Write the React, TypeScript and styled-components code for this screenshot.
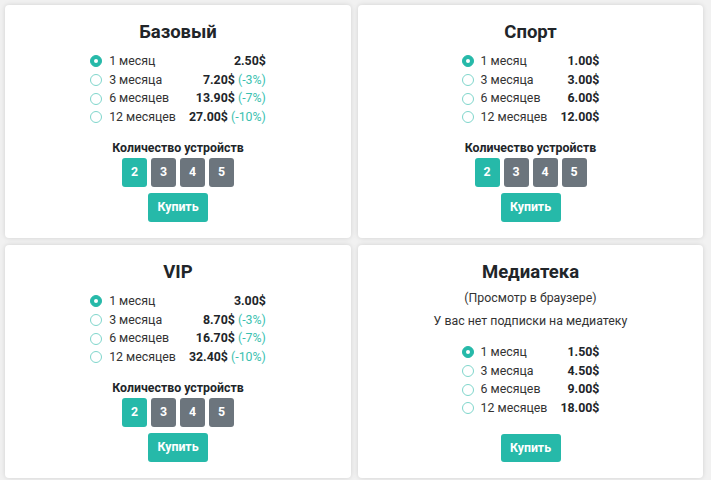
import React, { useState } from "react";
import styled, { createGlobalStyle } from "styled-components";

const GlobalStyle = createGlobalStyle`
  html, body { margin: 0; padding: 0; background: #f1f1f1; }
  body { font-family: Roboto, "Liberation Sans", Arial, sans-serif; color: #212529; }
  * { box-sizing: border-box; }
`;

const TEAL = "#26b9a9";
const FS = "12.35px";

const Page = styled.div`
  display: grid;
  grid-template-columns: 346px 345px;
  column-gap: 7px;
  row-gap: 7px;
  padding: 5px 8px 2px 5px;
  width: 711px;
  min-height: 480px;
`;

const Card = styled.section`
  background: #fff;
  border-radius: 4px;
  box-shadow: 0 0 5px rgba(0, 0, 0, 0.13);
  padding: 15px 16px 16px;
  display: flex;
  flex-direction: column;
  align-items: center;
  height: 233px;
`;

const Title = styled.h2<{ $tight?: boolean }>`
  margin: 0 0 ${(p) => (p.$tight ? "4px" : "8px")};
  font-size: 18.5px;
  line-height: 24px;
  font-weight: 700;
  color: #212529;
`;

const Note = styled.p<{ $last?: boolean }>`
  margin: ${(p) => (p.$last ? "3px 0 12px" : "0")};
  font-size: ${FS};
  line-height: 20px;
  color: #333;
`;

const Options = styled.div`
  display: grid;
  grid-template-columns: 12px auto auto;
  column-gap: 7px;
  align-items: center;
`;

const Radio = styled.span<{ $checked?: boolean }>`
  width: 12px;
  height: 12px;
  border-radius: 50%;
  border: 1px solid ${(p) => (p.$checked ? TEAL : "#7fd6cc")};
  background: ${(p) => (p.$checked ? TEAL : "#fff")};
  display: flex;
  align-items: center;
  justify-content: center;
  cursor: pointer;
  &::after {
    content: "";
    width: 4px;
    height: 4px;
    border-radius: 50%;
    background: #fff;
    display: ${(p) => (p.$checked ? "block" : "none")};
  }
`;

const Period = styled.span`
  font-size: ${FS};
  line-height: 18.67px;
  color: #333;
  padding-right: 6px;
  white-space: nowrap;
  cursor: pointer;
`;

const Price = styled.span`
  font-size: ${FS};
  line-height: 18.67px;
  font-weight: 700;
  color: #212529;
  justify-self: end;
  white-space: nowrap;
`;

const Discount = styled.span`
  font-weight: 400;
  color: #3bbfb0;
`;

const DevicesLabel = styled.div`
  margin-top: 13px;
  font-size: ${FS};
  line-height: 17px;
  font-weight: 700;
  color: #212529;
`;

const Devices = styled.div`
  display: flex;
  gap: 4px;
  margin-top: 1px;
`;

const DeviceButton = styled.button<{ $active?: boolean }>`
  width: 25px;
  height: 29px;
  border: none;
  border-radius: 3px;
  padding: 0;
  background: ${(p) => (p.$active ? TEAL : "#6c757d")};
  color: #fff;
  font-family: inherit;
  font-size: ${FS};
  font-weight: 700;
  cursor: pointer;
`;

const BuyButton = styled.button<{ $gap?: number }>`
  margin-top: ${(p) => p.$gap ?? 6}px;
  width: 60px;
  height: 29px;
  border: none;
  border-radius: 3px;
  background: ${TEAL};
  color: #fff;
  font-family: inherit;
  font-size: ${FS};
  font-weight: 700;
  cursor: pointer;
`;

type Opt = { period: string; price: string; discount?: string };

const periods = ["1 месяц", "3 месяца", "6 месяцев", "12 месяцев"];

function OptionsTable({ prices, discounts }: { prices: string[]; discounts?: (string | undefined)[] }) {
  const [sel, setSel] = useState(0);
  const opts: Opt[] = periods.map((p, i) => ({ period: p, price: prices[i], discount: discounts?.[i] }));
  return (
    <Options>
      {opts.map((o, i) => (
        <React.Fragment key={o.period}>
          <Radio $checked={sel === i} onClick={() => setSel(i)} />
          <Period onClick={() => setSel(i)}>{o.period}</Period>
          <Price>
            {o.price}
            {o.discount && <Discount> ({o.discount})</Discount>}
          </Price>
        </React.Fragment>
      ))}
    </Options>
  );
}

function DevicePicker() {
  const [dev, setDev] = useState(2);
  return (
    <>
      <DevicesLabel>Количество устройств</DevicesLabel>
      <Devices>
        {[2, 3, 4, 5].map((n) => (
          <DeviceButton key={n} $active={dev === n} onClick={() => setDev(n)}>
            {n}
          </DeviceButton>
        ))}
      </Devices>
    </>
  );
}

const discounts = [undefined, "-3%", "-7%", "-10%"];

export default function App() {
  return (
    <>
      <GlobalStyle />
      <Page>
        <Card>
          <Title>Базовый</Title>
          <OptionsTable prices={["2.50$", "7.20$", "13.90$", "27.00$"]} discounts={discounts} />
          <DevicePicker />
          <BuyButton>Купить</BuyButton>
        </Card>
        <Card>
          <Title>Спорт</Title>
          <OptionsTable prices={["1.00$", "3.00$", "6.00$", "12.00$"]} />
          <DevicePicker />
          <BuyButton>Купить</BuyButton>
        </Card>
        <Card>
          <Title>VIP</Title>
          <OptionsTable prices={["3.00$", "8.70$", "16.70$", "32.40$"]} discounts={discounts} />
          <DevicePicker />
          <BuyButton>Купить</BuyButton>
        </Card>
        <Card>
          <Title $tight>Медиатека</Title>
          <Note>(Просмотр в браузере)</Note>
          <Note $last>У вас нет подписки на медиатеку</Note>
          <OptionsTable prices={["1.50$", "4.50$", "9.00$", "18.00$"]} />
          <BuyButton $gap={16}>Купить</BuyButton>
        </Card>
      </Page>
    </>
  );
}
